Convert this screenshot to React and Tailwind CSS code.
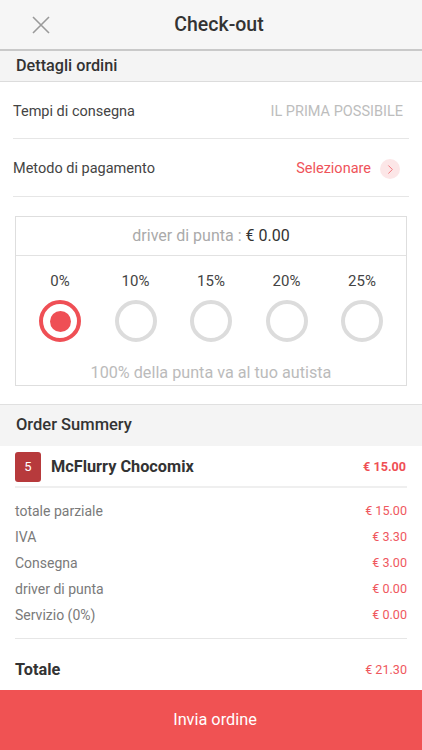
import { ChevronRight } from 'lucide-react'

const tips = ['0%', '10%', '15%', '20%', '25%']

const lines = [
  ['totale parziale', '€ 15.00'],
  ['IVA', '€ 3.30'],
  ['Consegna', '€ 3.00'],
  ['driver di punta', '€ 0.00'],
  ['Servizio (0%)', '€ 0.00'],
]

export default function App() {
  return (
    <div className="w-[422px] h-[750px] bg-white flex flex-col overflow-hidden font-['Roboto',sans-serif]">
      {/* header */}
      <div className="h-[51px] bg-[#f6f6f6] border-b-2 border-[#c9c9c9] flex items-center relative">
        <svg className="absolute left-[32px] top-[16px]" width="18" height="18" viewBox="0 0 18 18" fill="none">
          <path d="M1 1 L17 17 M17 1 L1 17" stroke="#9a9a9a" strokeWidth="1.6" />
        </svg>
        <div className="flex-1 text-center pl-[16px] text-[19.5px] font-medium text-[#333]">Check-out</div>
      </div>

      <div className="h-[31px] bg-[#f4f4f4] border-b border-[#dcdcdc] flex items-center px-4 text-[16.2px] font-medium text-[#333]">
        Dettagli ordini
      </div>

      <div className="px-[13px]">
        <div className="h-[57px] pt-[3px] flex items-center justify-between border-b border-[#e6e6e6]">
          <span className="text-[14.5px] text-[#444]">Tempi di consegna</span>
          <span className="text-[14.5px] text-[#bdbdbd] pr-[6px]">IL PRIMA POSSIBILE</span>
        </div>
        <div className="h-[58px] pt-[3px] flex items-center justify-between border-b border-[#e6e6e6]">
          <span className="text-[14.5px] text-[#444]">Metodo di pagamento</span>
          <span className="flex items-center gap-[9px] pr-[9px]">
            <span className="text-[14.5px] text-[#ef535a]">Selezionare</span>
            <span className="w-[20px] h-[20px] rounded-full bg-[#fce6e7] flex items-center justify-center">
              <ChevronRight size={15} strokeWidth={1.5} className="text-[#ef6f75]" />
            </span>
          </span>
        </div>
      </div>

      {/* tip box */}
      <div className="mx-[15px] mt-[19px] border border-[#dedede] flex flex-col">
        <div className="h-[39px] border-b border-[#e2e2e2] flex items-center justify-center text-[16px] text-[#aaa]">
          driver di punta :&nbsp;<span className="text-[#333]">€ 0.00</span>
        </div>
        <div className="flex justify-between px-[22px] pt-[16px]">
          {tips.map((t, i) => (
            <div key={t} className="flex flex-col items-center gap-[10px] w-[44px]">
              <span className="text-[15px] text-[#444] leading-[18px]">{t}</span>
              {i === 0 ? (
                <span className="w-[42px] h-[42px] rounded-full border-[4px] border-[#ef4f55] flex items-center justify-center">
                  <span className="w-[21px] h-[21px] rounded-full bg-[#ef4f55]" />
                </span>
              ) : (
                <span className="w-[42px] h-[42px] rounded-full border-[4px] border-[#dcdcdc]" />
              )}
            </div>
          ))}
        </div>
        <div className="text-center text-[16.2px] text-[#bbb] pt-[20px] pb-[1px] leading-[22px]">100% della punta va al tuo autista</div>
      </div>

      <div className="mt-[18px] h-[42px] bg-[#f4f4f4] border-t border-[#e0e0e0] flex items-center px-4 text-[16.5px] font-medium text-[#333]">
        Order Summery
      </div>

      <div className="px-[15px]">
        <div className="h-[42px] pt-[2px] flex items-center justify-between border-b-2 border-[#efefef]">
          <span className="flex items-center gap-[10px]">
            <span className="w-[26px] h-[30px] rounded-[3px] bg-[#b73a3c] text-white text-[13px] flex items-center justify-center">5</span>
            <span className="text-[16.3px] font-bold text-[#333]">McFlurry Chocomix</span>
          </span>
          <span className="text-[12.6px] font-bold text-[#ef4f55] pr-[1px]">€ 15.00</span>
        </div>
        <div className="pt-[11px] pb-[10px] border-b border-[#e6e6e6]">
          {lines.map(([l, v]) => (
            <div key={l} className="h-[25.8px] flex items-center justify-between">
              <span className="text-[14px] text-[#7a7a7a]">{l}</span>
              <span className="text-[12.6px] text-[#ef585e]">{v}</span>
            </div>
          ))}
        </div>
        <div className="pt-[19px] flex items-center justify-between">
          <span className="text-[16.3px] font-bold text-[#333]">Totale</span>
          <span className="text-[12.6px] text-[#ef585e]">€ 21.30</span>
        </div>
      </div>

      <div className="mt-auto h-[60px] bg-[#f05253] flex items-center justify-center pl-[8px] text-white text-[16.3px]">
        Invia ordine
      </div>
    </div>
  )
}
